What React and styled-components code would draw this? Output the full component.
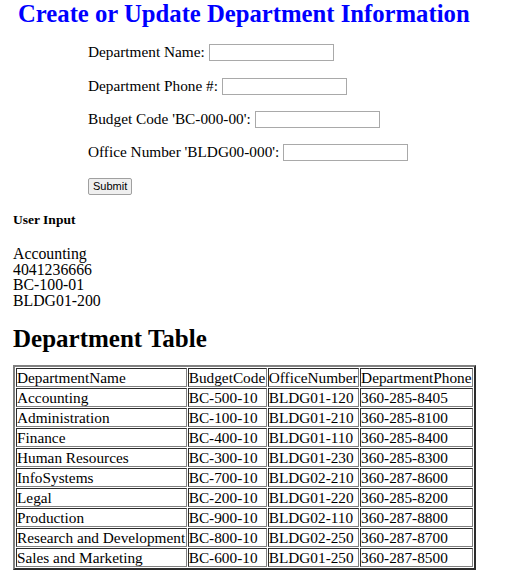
import React from 'react';
import styled, { createGlobalStyle } from 'styled-components';

const GlobalStyle = createGlobalStyle`
  body {
    margin: 0 8px 8px;
    font-family: "Liberation Serif", "DejaVu Serif", serif;
    font-size: 15.3px;
    color: #000;
    background: #fff;
  }
`;

const Title = styled.h1`
  margin: 0 0 0 10px;
  font-size: 24.7px;
  line-height: 28px;
  color: #0000ff;
`;

const Form = styled.form`
  padding-left: 80px;
  margin-top: 4px;
`;

const Field = styled.p`
  margin: ${(props) => (props.tight ? '13px 0 15px' : '15.3px 0')};
  line-height: 18px;
`;

const TextBox = styled.input`
  width: 121px;
  height: 13px;
  padding: 1px;
  border: 1px solid #a9a9a9;
  font-size: 13px;
  vertical-align: baseline;
`;

const SubmitButton = styled.button`
  font-family: "Liberation Sans", Arial, sans-serif;
  font-size: 11px;
  height: 17px;
  padding: 0 4px;
  border: 1px solid #a0a0a0;
  background: #efefef;
  border-radius: 2px;
`;

const Section = styled.div`
  padding-left: 5px;
`;

const SubHeading = styled.h5`
  font-size: 13.5px;
  margin: 17px 0 18px;
`;

const Echo = styled.div`
  line-height: 15.6px;
  font-size: 15.8px;
`;

const TableTitle = styled.h2`
  font-size: 25px;
  line-height: 26px;
  margin: 18px 0 13px;
`;

const Grid = styled.table`
  border: 2px outset #808080;
  border-spacing: 1px;
`;

const Cell = styled.td`
  border: 1px inset #808080;
  padding: 0 0.5px 0 0;
  line-height: 17px;
  white-space: nowrap;
`;

const rows = [
  ['Accounting', 'BC-500-10', 'BLDG01-120', '360-285-8405'],
  ['Administration', 'BC-100-10', 'BLDG01-210', '360-285-8100'],
  ['Finance', 'BC-400-10', 'BLDG01-110', '360-285-8400'],
  ['Human Resources', 'BC-300-10', 'BLDG01-230', '360-285-8300'],
  ['InfoSystems', 'BC-700-10', 'BLDG02-210', '360-287-8600'],
  ['Legal', 'BC-200-10', 'BLDG01-220', '360-285-8200'],
  ['Production', 'BC-900-10', 'BLDG02-110', '360-287-8800'],
  ['Research and Development', 'BC-800-10', 'BLDG02-250', '360-287-8700'],
  ['Sales and Marketing', 'BC-600-10', 'BLDG01-250', '360-287-8500'],
];

export default function App() {
  return (
    <>
      <GlobalStyle />
      <Title>Create or Update Department Information</Title>
      <Form onSubmit={(e) => e.preventDefault()}>
        <Field>Department Name: <TextBox type="text" /></Field>
        <Field>Department Phone #: <TextBox type="text" /></Field>
        <Field>Budget Code 'BC-000-00': <TextBox type="text" /></Field>
        <Field>Office Number 'BLDG00-000': <TextBox type="text" /></Field>
        <Field tight><SubmitButton type="submit">Submit</SubmitButton></Field>
      </Form>
      <Section>
        <SubHeading>User Input</SubHeading>
        <Echo>
          Accounting<br />
          4041236666<br />
          BC-100-01<br />
          BLDG01-200
        </Echo>
        <TableTitle>Department Table</TableTitle>
        <Grid>
          <tbody>
            <tr>
              <Cell>DepartmentName</Cell>
              <Cell>BudgetCode</Cell>
              <Cell>OfficeNumber</Cell>
              <Cell>DepartmentPhone</Cell>
            </tr>
            {rows.map((r) => (
              <tr key={r[0]}>
                {r.map((c) => <Cell key={c}>{c}</Cell>)}
              </tr>
            ))}
          </tbody>
        </Grid>
      </Section>
    </>
  );
}
